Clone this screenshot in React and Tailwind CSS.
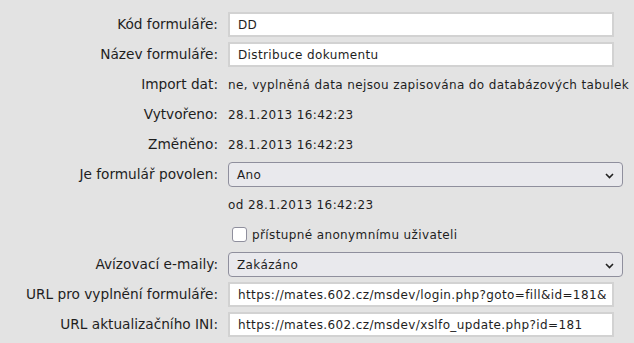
import React from "react";

function Chevron() {
  return (
    <svg width="9" height="6" viewBox="0 0 9 6" className="absolute right-[8px] top-[10px]">
      <path d="M1 1 L4.5 4.5 L8 1" fill="none" stroke="#222" strokeWidth="1.6" />
    </svg>
  );
}

function Label({ children }) {
  return (
    <div className="flex items-center justify-end h-[25px] whitespace-nowrap text-[13.7px] tracking-[0px]">
      {children}
    </div>
  );
}

function TextInput({ value }) {
  return (
    <div className="h-[25px] w-[386px] bg-white border-2 border-[#d2d2d2] flex items-center pl-[8px] whitespace-nowrap overflow-hidden">
      {value}
    </div>
  );
}

function Select({ value }) {
  return (
    <div className="relative h-[25px] w-[395px] bg-[#e9e9ed] border border-[#8f8f9d] rounded-[4px] flex items-center pl-[8px]">
      {value}
      <Chevron />
    </div>
  );
}

function Text({ children }) {
  return <div className="h-[25px] flex items-center whitespace-nowrap">{children}</div>;
}

export default function App() {
  return (
    <div
      className="w-[634px] h-[343px] bg-[#e3e3e3] text-[#1e1e1e] text-[12px] tracking-[0.38px] overflow-hidden"
      style={{ fontFamily: '"DejaVu Sans", sans-serif' }}
    >
      <div className="grid grid-cols-[218px_1fr] gap-x-[10px] gap-y-[5px] pt-[12px]">
        <Label>Kód formuláře:</Label>
        <TextInput value="DD" />
        <Label>Název formuláře:</Label>
        <TextInput value="Distribuce dokumentu" />
        <Label>Import dat:</Label>
        <Text>ne, vyplněná data nejsou zapisována do databázových tabulek</Text>
        <Label>Vytvořeno:</Label>
        <Text>28.1.2013 16:42:23</Text>
        <Label>Změněno:</Label>
        <Text>28.1.2013 16:42:23</Text>
        <Label>Je formulář povolen:</Label>
        <Select value="Ano" />
        <div />
        <Text>od 28.1.2013 16:42:23</Text>
        <div />
        <div className="h-[25px] flex items-center pl-[4px] gap-[5px]">
          <div className="w-[15px] h-[15px] bg-white border border-[#8f8f9d] rounded-[3px]" />
          <span className="whitespace-nowrap">přístupné anonymnímu uživateli</span>
        </div>
        <Label>Avízovací e-maily:</Label>
        <Select value="Zakázáno" />
        <Label>URL pro vyplnění formuláře:</Label>
        <TextInput value="https://mates.602.cz/msdev/login.php?goto=fill&id=181&" />
        <Label>URL aktualizačního INI:</Label>
        <TextInput value="https://mates.602.cz/msdev/xslfo_update.php?id=181" />
      </div>
    </div>
  );
}
